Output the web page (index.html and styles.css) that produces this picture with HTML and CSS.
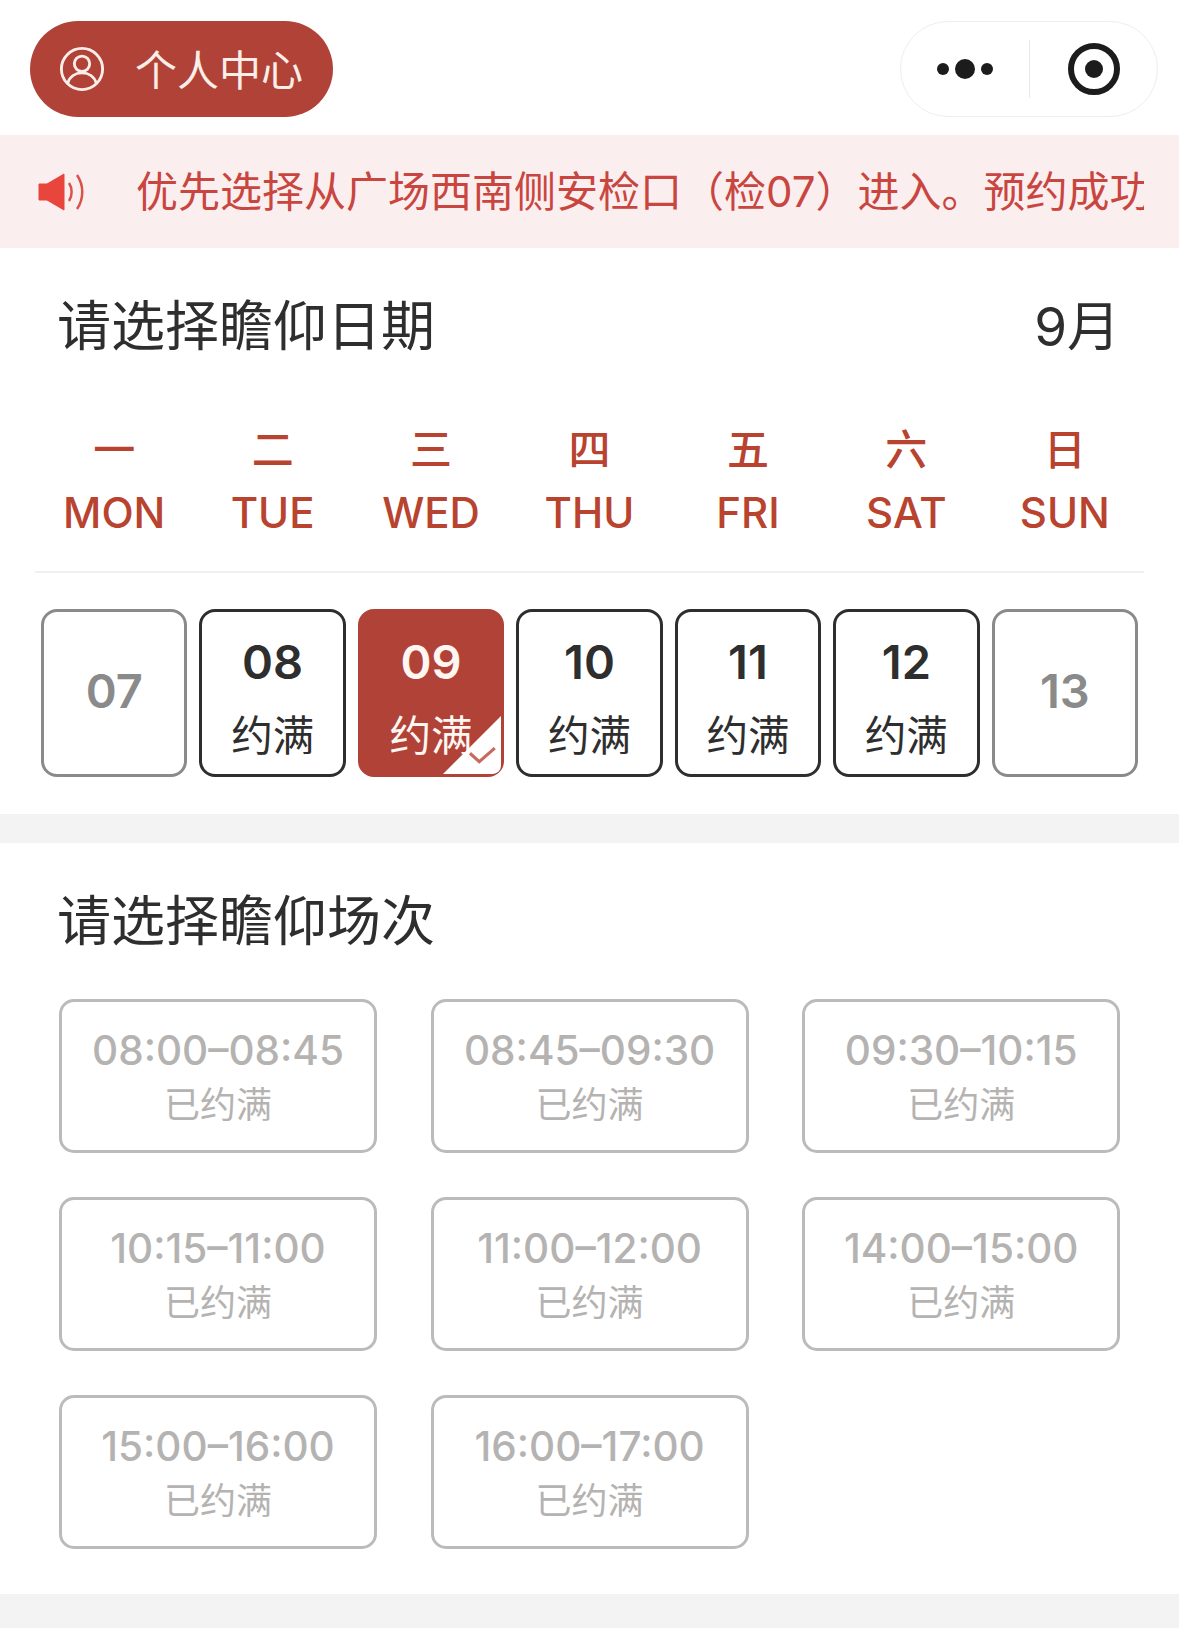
FILE: index.html
```html
<!DOCTYPE html>
<html lang="zh-CN">
<head>
    <meta charset="UTF-8">
    <meta name="viewport" content="width=device-width, initial-scale=1.0">
    <title>瞻仰预约</title>
    <link rel="stylesheet" href="styles.css">
</head>
<body>
    <!-- 顶部导航 -->
    <header class="top-bar">
        <div class="profile-btn">
            <svg class="profile-icon" viewBox="0 0 48 48" fill="none" stroke="#fbeee8" stroke-width="3">
                <circle cx="24" cy="24" r="21.5"/>
                <circle cx="24" cy="18.5" r="8"/>
                <path d="M9 39c2-7 8-11 15-11s13 4 15 11"/>
            </svg>
            <span>个人中心</span>
        </div>
        <div class="capsule">
            <div class="capsule-dots">
                <i class="dot"></i><i class="dot dot-big"></i><i class="dot"></i>
            </div>
            <div class="capsule-line"></div>
            <div class="capsule-close"><i></i></div>
        </div>
    </header>

    <!-- 通知栏 -->
    <div class="notice">
        <svg class="notice-icon" viewBox="0 0 47 40" fill="none">
            <path d="M1 12h8L26 2v36L9 28H1z" fill="#e8453c" stroke="#e8453c" stroke-linejoin="round"/>
            <path d="M31 11c3.500 5 3.500 13 0 18" stroke="#d9534c" stroke-width="2.500"/>
            <path d="M39 3c7 10 7 24 0 34" stroke="#d9534c" stroke-width="2.500"/>
        </svg>
        <div class="notice-text">优先选择从广场西南侧安检口（检07）进入。预约成功后请按时到达</div>
    </div>

    <!-- 日期 -->
    <section class="date-section">
        <div class="section-head">
            <h2>请选择瞻仰日期</h2>
            <span class="month">9月</span>
        </div>
        <div class="week">
            <div class="week-day"><span>一</span><span>MON</span></div>
            <div class="week-day"><span>二</span><span>TUE</span></div>
            <div class="week-day"><span>三</span><span>WED</span></div>
            <div class="week-day"><span>四</span><span>THU</span></div>
            <div class="week-day"><span>五</span><span>FRI</span></div>
            <div class="week-day"><span>六</span><span>SAT</span></div>
            <div class="week-day"><span>日</span><span>SUN</span></div>
        </div>
        <div class="days">
            <div class="day off"><b>07</b></div>
            <div class="day"><b>08</b><span>约满</span></div>
            <div class="day active">
                <b>09</b><span>约满</span>
                <svg class="day-check" viewBox="0 0 56 56">
                    <path d="M56 0v48a8 8 0 0 1-8 8H0z" fill="#fff"/>
                    <path d="M26 36l9 8 15-13" fill="none" stroke="#c9695c" stroke-width="3"/>
                </svg>
            </div>
            <div class="day"><b>10</b><span>约满</span></div>
            <div class="day"><b>11</b><span>约满</span></div>
            <div class="day"><b>12</b><span>约满</span></div>
            <div class="day off"><b>13</b></div>
        </div>
    </section>

    <!-- 场次 -->
    <section class="time-section">
        <h2>请选择瞻仰场次</h2>
        <div class="slots">
            <div class="slot"><b>08:00–08:45</b><span>已约满</span></div>
            <div class="slot"><b>08:45–09:30</b><span>已约满</span></div>
            <div class="slot"><b>09:30–10:15</b><span>已约满</span></div>
            <div class="slot"><b>10:15–11:00</b><span>已约满</span></div>
            <div class="slot"><b>11:00–12:00</b><span>已约满</span></div>
            <div class="slot"><b>14:00–15:00</b><span>已约满</span></div>
            <div class="slot"><b>15:00–16:00</b><span>已约满</span></div>
            <div class="slot"><b>16:00–17:00</b><span>已约满</span></div>
        </div>
    </section>
</body>
</html>
```

FILE: styles.css
```css
/* 基础 */
body {
    font-family: "Inter", "Noto Sans CJK SC", sans-serif;
    background: #F3F3F3;
    color: #2E2E2E;
    margin: 0;
    height: 1628px;
    overflow: hidden;
}

h2 {
    font-size: 54px;
    font-weight: 400;
    line-height: 72px;
    margin: 0;
    font-family: "Noto Sans CJK SC", sans-serif;
}

/* 顶部导航 */
.top-bar {
    background: #fff;
    display: flex;
    justify-content: space-between;
    padding: 21px 21px 18px 30px;
}

.profile-btn {
    width: 303px;
    height: 96px;
    box-sizing: border-box;
    padding-left: 29px;
    background: #B04237;
    border-radius: 48px;
    display: flex;
    align-items: center;
    gap: 30px;
    color: #FBEEE8;
    font-size: 42px;
    font-family: "Noto Sans CJK SC", sans-serif;
}

.profile-btn span {
    padding-bottom: 4px;
}

.profile-icon {
    width: 46px;
    height: 46px;
}

.capsule {
    width: 258px;
    height: 96px;
    box-sizing: border-box;
    border: 1px solid #EEE;
    border-radius: 48px;
    display: flex;
    align-items: center;
}

.capsule-dots {
    width: 128px;
    display: flex;
    justify-content: center;
    align-items: center;
    gap: 6px;
}

.dot {
    width: 12px;
    height: 12px;
    border-radius: 50%;
    background: #1C1C1C;
}

.dot-big {
    width: 20px;
    height: 20px;
}

.capsule-line {
    width: 1px;
    height: 58px;
    background: #E8E8E8;
}

.capsule-close {
    flex: 1;
    display: flex;
    justify-content: center;
}

.capsule-close i {
    width: 52px;
    height: 52px;
    box-sizing: border-box;
    border: 6px solid #1C1C1C;
    border-radius: 50%;
    display: flex;
    align-items: center;
    justify-content: center;
}

.capsule-close i::after {
    content: '';
    width: 18px;
    height: 18px;
    border-radius: 50%;
    background: #1C1C1C;
}

/* 通知栏 */
.notice {
    height: 113px;
    background: #FBEEEE;
    display: flex;
    align-items: center;
    padding: 0 35px 0 38px;
}

.notice-icon {
    width: 47px;
    height: 40px;
    flex-shrink: 0;
}

.notice-text {
    margin-left: 51px;
    padding-bottom: 6px;
    font-size: 42px;
    color: #C9453F;
    white-space: nowrap;
    overflow: hidden;
}

/* 日期 */
.date-section {
    background: #fff;
    padding: 39px 35px 37px;
    margin-bottom: 29px;
}

.section-head {
    display: flex;
    justify-content: space-between;
    align-items: flex-start;
    padding: 0 24px 0 22px;
}

.month {
    font-size: 53px;
    line-height: 72px;
    padding-top: 4px;
}

.week {
    display: grid;
    grid-template-columns: repeat(7, 1fr);
    margin-top: 58px;
    padding-bottom: 29px;
    border-bottom: 2px solid #F0F0F0;
}

.week-day {
    display: flex;
    flex-direction: column;
    align-items: center;
    gap: 5px;
    color: #B8432F;
    font-size: 42px;
    font-weight: 500;
    line-height: 58px;
}

.days {
    display: grid;
    grid-template-columns: repeat(7, 1fr);
    gap: 12px;
    margin: 36px 6px 0;
}

.day {
    position: relative;
    height: 168px;
    box-sizing: border-box;
    padding-top: 6px;
    border: 3px solid #2E2E2E;
    border-radius: 16px;
    display: flex;
    flex-direction: column;
    align-items: center;
    justify-content: center;
    gap: 13px;
    background: #fff;
}

.day b {
    font-size: 47px;
    font-weight: 600;
    line-height: 60px;
}

.day span {
    font-size: 41.5px;
    line-height: 56px;
    font-family: "Noto Sans CJK SC", sans-serif;
}

.day.off {
    padding: 0 0 4px;
    border-color: #8A8A8A;
    color: #8A8A8A;
}

.day.active {
    background: #B04237;
    border-color: #B04237;
    color: #FFF6F2;
}

.day-check {
    position: absolute;
    right: 0;
    bottom: 0;
    width: 58px;
    height: 58px;
}

/* 场次 */
.time-section {
    background: #fff;
    padding: 39px 59px 45px;
}

.time-section h2 {
    margin-left: -2px;
}

.slots {
    display: grid;
    grid-template-columns: repeat(3, 318px);
    column-gap: 53.6px;
    row-gap: 44px;
    margin-top: 45px;
}

.slot {
    height: 154px;
    box-sizing: border-box;
    padding-bottom: 1px;
    border: 3px solid #BBB;
    border-radius: 15px;
    display: flex;
    flex-direction: column;
    align-items: center;
    justify-content: center;
    color: #B5B3B2;
}

.slot b {
    font-size: 40.5px;
    font-weight: 500;
    line-height: 52px;
}

.slot span {
    font-size: 36px;
    line-height: 50px;
    font-family: "Noto Sans CJK SC", sans-serif;
}
```
